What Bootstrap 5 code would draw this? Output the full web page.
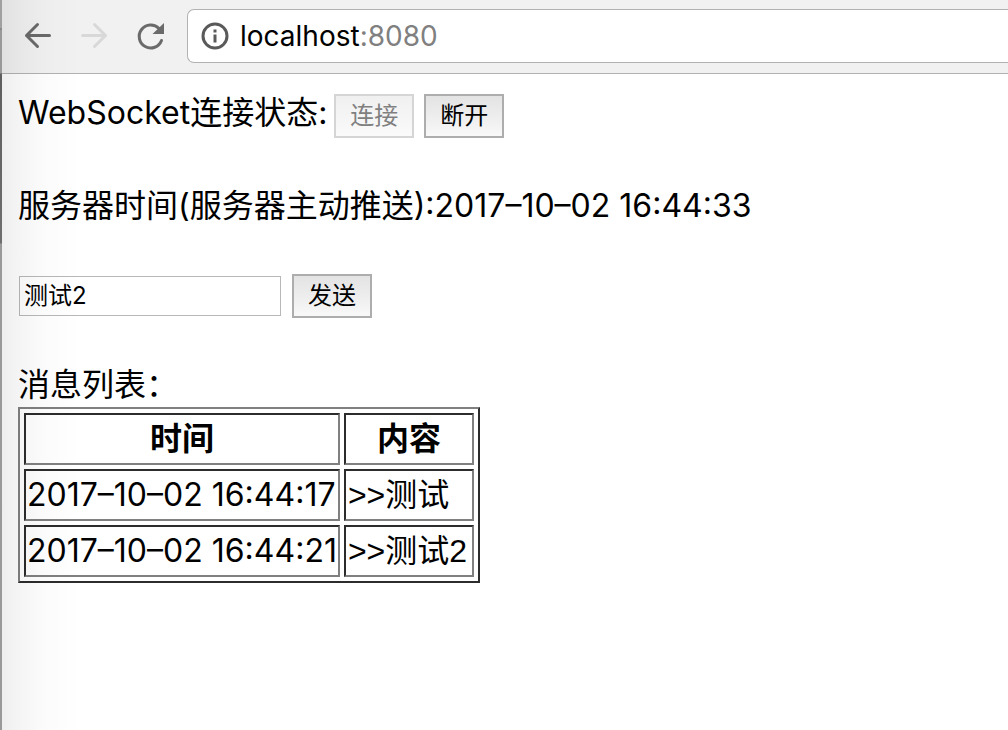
<!DOCTYPE html>
<html lang="zh-CN">
<head>
<meta charset="utf-8">
<meta name="viewport" content="width=device-width, initial-scale=1">
<title>WebSocket</title>
<link href="https://cdn.jsdelivr.net/npm/bootstrap@5.3.0/dist/css/bootstrap.min.css" rel="stylesheet">
<style>
body { font-family: Inter, "Noto Sans CJK SC", sans-serif; font-size: 32px; line-height: 44px; color: #000; background: #fff; overflow-x: hidden; }
/* the sliver of the window behind, and the shadow beside it */
.window-edge { width: 2px; background: linear-gradient(#a0a0a0 28px, #777 29px, #999 30px, #999 73px, #5e5e5e 74px, #6e6e6e 243px, #999 244px); }
.browser { position: relative; min-width: 0; }
.browser::after { content: ""; position: absolute; inset: 0 auto 0 0; width: 80px; pointer-events: none; background: linear-gradient(to right, rgba(0,0,0,.065), rgba(0,0,0,.045) 16px, rgba(0,0,0,.015) 42px, transparent); }
.toolbar { height: 74px; background: #f1f1f1; border-bottom: 1px solid #b2b2b2; padding: 0 0 2px 20px; }
.tools { gap: 24px; }
.tool { border: 0; background: none; padding: 0; width: 32px; height: 32px; color: #6a6a6a; display: block; line-height: 0; }
.tool:disabled { color: #d8d8d8; }
.tool svg, .info-icon { display: block; }
.address { height: 54px; margin-left: 21px; padding-left: 12px; gap: 10px; background: #fff; border: 1px solid #b2b2b2; border-right: 0; border-radius: 7px 0 0 7px; font-size: 28px; line-height: 36px; }
.port { color: #808080; }
.content { padding: 17px 16px; }
.block-gap { margin-bottom: 45px; }
.status-row { gap: 7px; }
.time-line { line-height: 46px; }
.send-row { gap: 11px; padding-left: 1px; }
.btn-native { width: 80px; height: 44px; padding: 0; border: 2px solid #adadad; border-radius: 0; background: linear-gradient(#e3e3e3, #f8f8f8); color: #000; font-size: 24px; line-height: 38px; }
.btn-native:disabled { border-color: #d5d5d5; background: linear-gradient(#f0f0f0, #fafafa); color: #808080; opacity: 1; }
.button-pair { gap: 10px; }
.message-box { width: 262px; height: 40px; padding: 0 4px; border: 1px solid #b8b8b8; border-radius: 0; font-size: 24px; color: #000; }
.messages { border: 2px outset #808080; border-collapse: separate; border-spacing: 4px; }
.messages th, .messages td { border: 2px inset #808080; padding: 2px 1px; white-space: nowrap; }
.messages th { text-align: center; }
.messages .message-col { min-width: 130px; padding: 2px; font-family: "Liberation Sans", "Noto Sans CJK SC", sans-serif; }
</style>
</head>
<body>
<div class="d-flex min-vh-100">
  <div class="window-edge flex-shrink-0"></div>
  <div class="browser flex-grow-1">
    <header class="toolbar d-flex align-items-center">
      <nav class="tools d-flex" aria-label="导航">
        <button class="tool" type="button" aria-label="后退"><svg width="32" height="32" viewBox="0 0 32 32" fill="none" stroke="currentColor" stroke-width="3" stroke-linecap="round" stroke-linejoin="round"><path d="M27.500 15.500H4.500M15.500 4.500L4.500 15.500L15.500 26.500"/></svg></button>
        <button class="tool" type="button" aria-label="前进" disabled><svg width="32" height="32" viewBox="0 0 32 32" fill="none" stroke="currentColor" stroke-width="3" stroke-linecap="round" stroke-linejoin="round"><path d="M4.500 15.500H27.500M16.500 4.500L27.500 15.500L16.500 26.500"/></svg></button>
        <button class="tool" type="button" aria-label="刷新"><svg width="32" height="32" viewBox="0 0 32 32"><path d="M25 8.500A11.500 11.500 0 1 0 27.500 20.500" fill="none" stroke="currentColor" stroke-width="3" stroke-linecap="round"/><path d="M30 3V14H18.500Z" fill="currentColor"/></svg></button>
      </nav>
      <div class="address d-flex align-items-center flex-grow-1">
        <svg class="info-icon flex-shrink-0" width="30" height="30" viewBox="0 0 30 30"><circle cx="15" cy="15" r="12" fill="none" stroke="#5a5a5a" stroke-width="3"/><path d="M13.500 8.500h3v3h-3zM13.500 13.500h3v8h-3z" fill="#5a5a5a"/></svg>
        <span>localhost<span class="port">:8080</span></span>
      </div>
    </header>
    <main class="content">
      <div class="status-row block-gap d-flex align-items-baseline"><span>WebSocket连接状态:</span>
        <div class="button-pair d-flex align-items-baseline"><button class="btn btn-native" type="button" disabled>连接</button><button class="btn btn-native" type="button">断开</button></div>
      </div>
      <div class="time-line block-gap">服务器时间(服务器主动推送):2017–10–02 16:44:33</div>
      <form class="send-row block-gap d-flex align-items-center" onsubmit="return false">
        <input class="message-box" type="text" value="测试2" aria-label="消息">
        <button class="btn btn-native" type="submit">发送</button>
      </form>
      <div id="list-title">消息列表：</div>
      <table class="messages" aria-labelledby="list-title">
        <thead><tr><th scope="col">时间</th><th class="message-col" scope="col">内容</th></tr></thead>
        <tbody>
          <tr><td>2017–10–02 16:44:17</td><td class="message-col">&gt;&gt;测试</td></tr>
          <tr><td>2017–10–02 16:44:21</td><td class="message-col">&gt;&gt;测试2</td></tr>
        </tbody>
      </table>
    </main>
  </div>
</div>
<script src="https://cdn.jsdelivr.net/npm/bootstrap@5.3.0/dist/js/bootstrap.bundle.min.js"></script>
</body>
</html>
